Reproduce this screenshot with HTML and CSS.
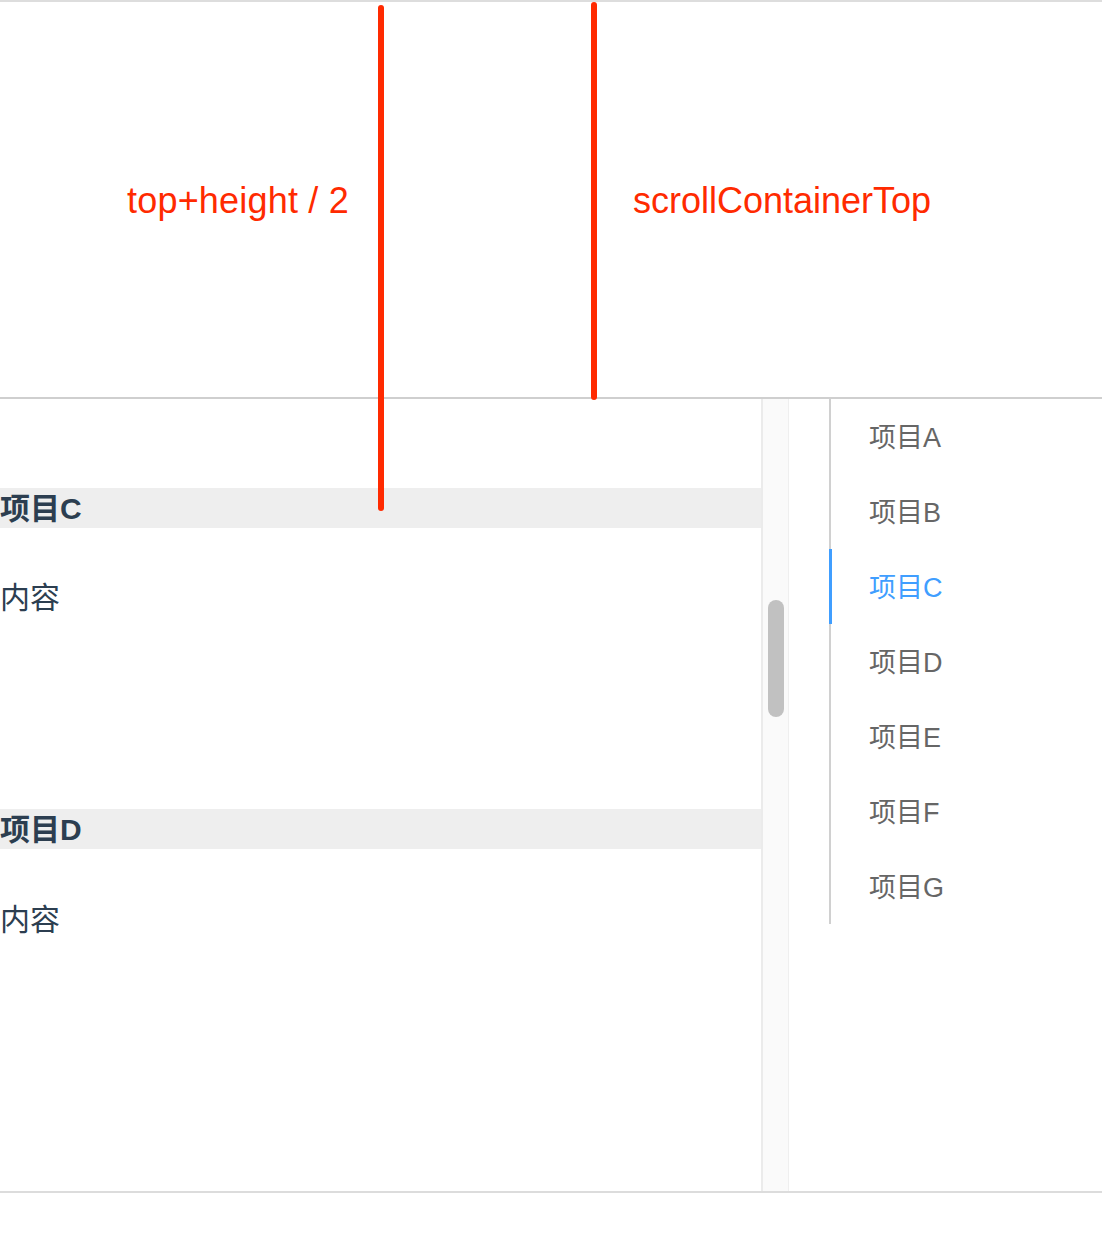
FILE: index.html
```html
<!DOCTYPE html>
<html lang="zh">
<head>
<meta charset="utf-8">
<title>Anchor</title>
<link rel="stylesheet" href="styles.css">
</head>
<body>
<div class="page">
  <div class="top-rule"></div>
  <div class="annot">
    <span class="label label-mid">top+height / 2</span>
    <span class="label label-top">scrollContainerTop</span>
  </div>
  <div class="marker marker-mid"></div>
  <div class="marker marker-top"></div>

  <div class="container">
    <div class="scroll">
      <div class="content">
        <div class="tail"></div>
        <section class="section">
          <h3 class="section-title">项目C</h3>
          <div class="section-body">内容</div>
        </section>
        <section class="section">
          <h3 class="section-title">项目D</h3>
          <div class="section-body section-body-last">内容</div>
        </section>
      </div>
      <div class="scrollbar"><div class="thumb"></div></div>
    </div>
    <nav class="nav">
      <ul class="nav-list">
        <li class="nav-item">项目A</li>
        <li class="nav-item">项目B</li>
        <li class="nav-item active">项目C</li>
        <li class="nav-item">项目D</li>
        <li class="nav-item">项目E</li>
        <li class="nav-item">项目F</li>
        <li class="nav-item">项目G</li>
      </ul>
    </nav>
  </div>
</div>
</body>
</html>
```

FILE: styles.css
```css
html, body {
  margin: 0;
  padding: 0;
  background: #fff;
}
body {
  font-family: "Liberation Sans", "Noto Sans CJK SC", sans-serif;
  width: 1102px;
  height: 1242px;
  overflow: hidden;
}
.page {
  position: relative;
}
.top-rule {
  height: 2px;
  background: #dddddd;
}
.annot {
  height: 395px;
  display: flex;
  align-items: center;
}
.label {
  color: #ff2a00;
  font-size: 36px;
  line-height: 40px;
  padding-top: 2px;
}
.label-mid {
  margin-left: 127px;
  letter-spacing: 0.2px;
}
.label-top {
  margin-left: 284px;
}
.marker {
  position: absolute;
  width: 6px;
  background: #ff2a00;
  border-radius: 3px;
  z-index: 5;
}
.marker-mid {
  left: 378px;
  top: 5px;
  height: 506px;
}
.marker-top {
  left: 591px;
  top: 2px;
  height: 398px;
}
.container {
  display: flex;
  border-top: 2px solid #cfcfcf;
  border-bottom: 2px solid #dcdcdc;
  height: 792px;
}
.scroll {
  width: 789px;
  display: flex;
  overflow: hidden;
}
.content {
  width: 761px;
  overflow: hidden;
}
.tail {
  height: 89px;
}
.section-title {
  margin: 0;
  height: 40px;
  line-height: 42px;
  background: #eeeeee;
  color: #2c3e50;
  font-size: 30px;
  font-weight: bold;
}
.section-body {
  height: 231px;
  padding-top: 50px;
  line-height: 40px;
  font-size: 30px;
  color: #2c3e50;
}
.section-body-last {
  height: 400px;
  padding-top: 51px;
}
.scrollbar {
  box-sizing: border-box;
  width: 28px;
  height: 792px;
  background: #fafafa;
  border-left: 2px solid #ebebeb;
  border-right: 1px solid #efefef;
  padding-top: 201px;
}
.thumb {
  width: 16px;
  height: 117px;
  margin-left: 5px;
  background: #c1c1c1;
  border-radius: 8px;
}
.nav {
  flex: 1;
}
.nav-list {
  list-style: none;
  margin: 0 0 0 40px;
  padding: 0;
  border-left: 2px solid #d0d0d0;
}
.nav-item {
  margin-left: -2px;
  border-left: 3px solid transparent;
  padding-left: 37px;
  height: 75px;
  line-height: 78px;
  font-size: 27px;
  color: #666666;
}
.nav-item.active {
  border-left-color: #409eff;
  color: #409eff;
}
```
